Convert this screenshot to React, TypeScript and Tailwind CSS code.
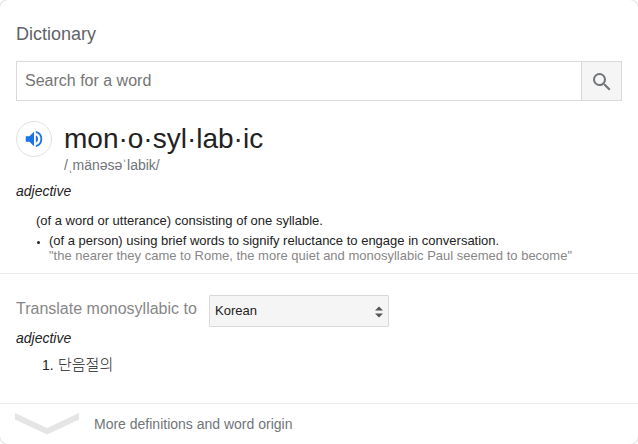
export default function App() {
  return (
    <div className="relative w-[638px] h-[444px] bg-white overflow-hidden font-['Liberation_Sans','Noto_Sans_CJK_KR',sans-serif] text-[#222] flex flex-col">
      <div className="pointer-events-none absolute -inset-px rounded-[9px] border border-[#dadce0]" />
      <div className="px-4 h-[273px] shrink-0">
        <h1 className="text-[18px] leading-[24px] pt-[22px] text-[#5f6368]">Dictionary</h1>
        <div className="mt-[15px] flex h-[40px] w-[606px] border border-[#d9d9d9]">
          <div className="flex-1 pl-2 text-[16px] leading-[38px] text-[#757575]">Search for a word</div>
          <div className="w-[40px] border-l border-[#d9d9d9] bg-[#f5f5f5] flex items-center justify-center">
            <svg className="mt-px" width="24" height="24" viewBox="0 0 24 24" fill="#70757a"><path d="M15.5 14h-.79l-.28-.27A6.47 6.47 0 0 0 16 9.5 6.5 6.5 0 1 0 9.5 16c1.61 0 3.09-.59 4.23-1.57l.27.28v.79l5 4.99L20.49 19l-4.99-5zm-6 0C7.01 14 5 11.99 5 9.5S7.01 5 9.5 5 14 7.01 14 9.5 11.99 14 9.5 14z" /></svg>
          </div>
        </div>
        <div className="mt-[20px] flex">
          <div className="w-[36px] h-[36px] rounded-full border border-[#dfe1e5] flex items-center justify-center">
            <svg width="22" height="22" viewBox="0 0 24 24" fill="#1a73e8"><path d="M3 9v6h4l5 5V4L7 9H3zm13.5 3A4.5 4.5 0 0 0 14 7.97v8.05A4.48 4.48 0 0 0 16.5 12zM14 3.23v2.06a7 7 0 0 1 0 13.42v2.06a9 9 0 0 0 0-17.54z" /></svg>
          </div>
          <div className="ml-[12px] whitespace-nowrap">
            <div className="text-[28px] leading-[36px]">mon·o·syl·lab·ic</div>
            <div className="text-[14px] leading-[16px] pb-[2px] text-[#70757a]">/ˌmänəsəˈlabik/</div>
          </div>
        </div>
        <div className="mt-[7px] text-[14px] leading-[18px] italic">adjective</div>
        <div className="mt-[11px] ml-[20px] text-[13px] leading-[20px] whitespace-nowrap">(of a word or utterance) consisting of one syllable.</div>
        <div className="ml-[20px] flex text-[13px] leading-[20px] whitespace-nowrap">
          <span className="w-[13px] pt-[10px] pl-[1px]"><i className="block w-[3px] h-[3px] rounded-full bg-[#222]" /></span>
          <div>
            <div>(of a person) using brief words to signify reluctance to engage in conversation.</div>
            <div className="leading-[10px] text-[#878787]">"the nearer they came to Rome, the more quiet and monosyllabic Paul seemed to become"</div>
          </div>
        </div>
      </div>
      <div className="border-t border-[#ebebeb] h-[130px] shrink-0 px-4 pt-[21px]">
        <div className="flex h-[32px]">
          <div className="w-[193px] whitespace-nowrap text-[16px] leading-[28px] text-[#878787]">Translate monosyllabic to</div>
          <div className="w-[180px] h-[32px] rounded-[1px] border border-[#d9d9d9] bg-[#f5f5f5] pl-[5px] pr-[5px] flex items-center justify-between text-[13px]">
            <span>Korean</span>
            <svg className="mt-px" width="8" height="12" viewBox="0 0 8 12" fill="#555"><path d="M0 4.5L4 0.5L8 4.5ZM0 7.5L4 11.5L8 7.5Z" /></svg>
          </div>
        </div>
        <div className="mt-[2px] text-[14px] leading-[18px] italic">adjective</div>
        <div className="mt-[8px] ml-[26px] flex text-[14px] leading-[20px]"><span className="w-[16px]">1.</span><span className="text-[15px] font-light">단음절의</span></div>
      </div>
      <div className="border-t border-[#ebebeb] flex-1 flex items-center pl-[15px]">
        <svg width="64" height="22" viewBox="0 0 64 22" fill="#e5e5e5"><path d="M0 0L32 15L64 0V6.5L32 21.5L0 6.5Z" /></svg>
        <span className="ml-[15px] text-[14px] leading-[20px] text-[#70757a]">More definitions and word origin</span>
      </div>
    </div>
  );
}
